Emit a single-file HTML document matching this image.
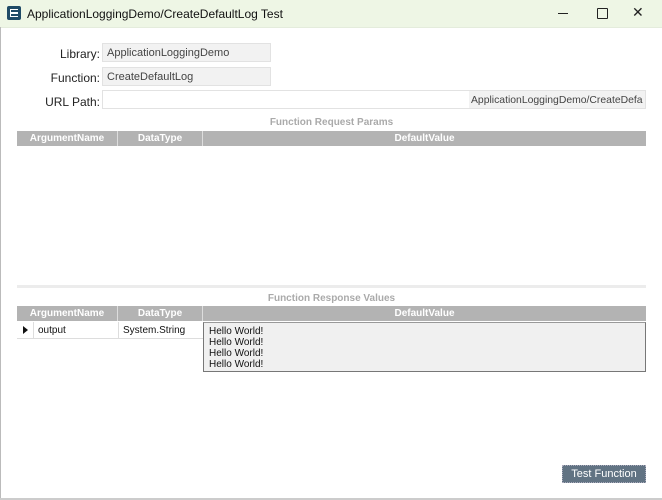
<html><head><style>
body{margin:0;width:662px;height:500px;background:#fff;font-family:"Liberation Sans",sans-serif;position:relative;overflow:hidden}
.a{position:absolute}
.tb{left:0;top:0;width:662px;height:27px;background:#eef6e5;border-bottom:1px solid #e4ecdc}
.lbl{font-size:12px;color:#222;text-align:right;width:100px;left:0}
.in{background:#f2f2f2;border:1px solid #e2e2e2;font-size:11px;color:#444;box-sizing:border-box;padding:3px 0 0 4px}
.hd{background:#b3b3b3;height:15px;color:#fff;font-weight:bold;font-size:10px;text-align:center;line-height:16px;box-sizing:border-box;border-right:1px solid #ddd}
.cap{font-size:10px;font-weight:bold;color:#aaa;width:629px;left:17px;text-align:center}
</style></head><body>
<div class="a tb"></div>
<div class="a" style="left:7px;top:6px;width:14px;height:14px;background:#1f4a66;border-radius:2px"><div style="position:absolute;left:3px;top:3px;width:8px;height:8px;border:1.5px solid #fff;border-right:none;box-sizing:border-box"></div><div style="position:absolute;left:4px;top:6px;width:7px;height:1.5px;background:#fff"></div></div>
<div class="a" style="left:27px;top:7px;font-size:12px;color:#111">ApplicationLoggingDemo/CreateDefaultLog Test</div>
<div class="a" style="left:558px;top:13px;width:10px;height:1px;background:#222"></div>
<div class="a" style="left:597px;top:8px;width:9px;height:9px;border:1px solid #222;border-radius:1px"></div>
<div class="a" style="left:632px;top:4px;font-size:14px;color:#222">✕</div>
<div class="a" style="left:0;top:27px;width:1px;height:473px;background:#bbb"></div>
<div class="a" style="left:0;top:498px;width:662px;height:2px;background:#ccc"></div>
<div class="a lbl" style="top:47px">Library:</div>
<div class="a in" style="left:102px;top:43px;width:169px;height:19px">ApplicationLoggingDemo</div>
<div class="a lbl" style="top:71px">Function:</div>
<div class="a in" style="left:102px;top:67px;width:169px;height:19px">CreateDefaultLog</div>
<div class="a lbl" style="top:95px">URL Path:</div>
<div class="a in" style="left:102px;top:90px;width:544px;height:19px;background:#fff;padding:0;overflow:hidden"><div style="position:absolute;left:366px;top:0;width:180px;height:19px;background:#f2f2f2;padding:4px 0 0 2px;box-sizing:border-box;font-size:10.4px">ApplicationLoggingDemo/CreateDefa</div></div>
<div class="a cap" style="top:117px">Function Request Params</div>
<div class="a hd" style="left:17px;top:131px;width:101px">ArgumentName</div>
<div class="a hd" style="left:118px;top:131px;width:85px">DataType</div>
<div class="a hd" style="left:203px;top:131px;width:443px;border:none">DefaultValue</div>
<div class="a" style="left:17px;top:285px;width:629px;height:3px;background:#ececec"></div>
<div class="a cap" style="top:293px">Function Response Values</div>
<div class="a hd" style="left:17px;top:306px;width:101px">ArgumentName</div>
<div class="a hd" style="left:118px;top:306px;width:85px">DataType</div>
<div class="a hd" style="left:203px;top:306px;width:443px;border:none">DefaultValue</div>
<div class="a" style="left:17px;top:322px;width:186px;height:17px;border-bottom:1px solid #ddd;box-sizing:border-box"></div>
<div class="a" style="left:33px;top:322px;width:1px;height:17px;background:#ddd"></div>
<div class="a" style="left:118px;top:322px;width:1px;height:17px;background:#ddd"></div>
<div class="a" style="left:23px;top:326px;width:0;height:0;border-left:5px solid #111;border-top:4px solid transparent;border-bottom:4px solid transparent"></div>
<div class="a" style="left:38px;top:325px;font-size:10px;color:#111">output</div>
<div class="a" style="left:123px;top:325px;font-size:10px;color:#111">System.String</div>
<div class="a" style="left:203px;top:322px;width:443px;height:50px;background:#f0f0f0;border:1px solid #777;border-top-color:#999;box-sizing:border-box;padding:3px 5px;font-size:10px;line-height:11px;color:#111">Hello World!<br>Hello World!<br>Hello World!<br>Hello World!</div>
<div class="a" style="left:562px;top:465px;width:84px;height:18px;background:#617383;border:1px dotted #aab;box-sizing:border-box;color:#fff;font-size:11px;text-align:center;line-height:17px">Test Function</div>
</body></html>
